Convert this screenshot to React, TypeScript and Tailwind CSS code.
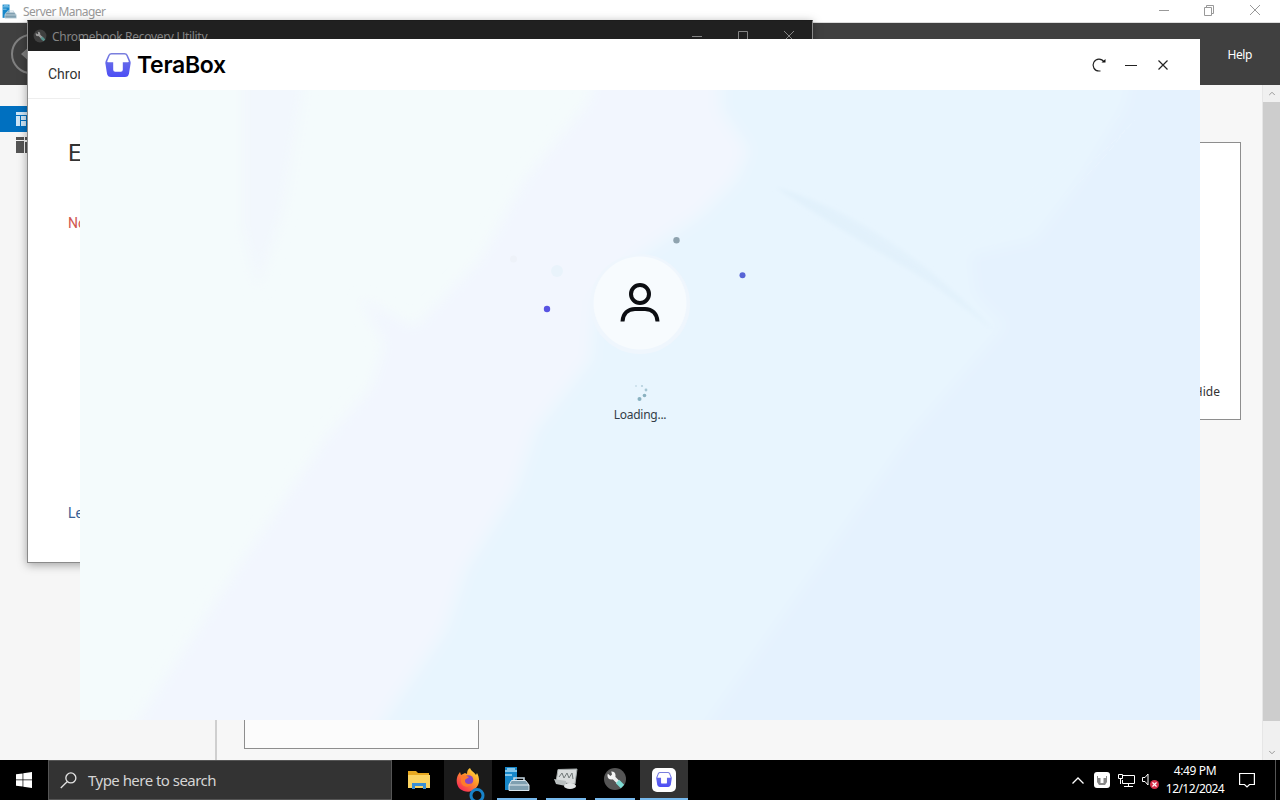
import { ChevronUp, ChevronDown, X } from "lucide-react";

const spinnerDots = [
  { x: 4, y: 3, r: 1, o: 0.3 },
  { x: 10, y: 3, r: 1.1, o: 0.45 },
  { x: 14, y: 7, r: 1.4, o: 0.6 },
  { x: 12.5, y: 12.5, r: 1.8, o: 0.85 },
  { x: 7.5, y: 16, r: 2, o: 0.85 },
];

function ServerIcon({ className }: { className: string }) {
  return (
    <svg viewBox="0 0 26 26" className={className}>
      <path d="M1 1h12v23H1z" fill="#1787c9" />
      <path d="M1 5h12M1 9h7M3 3h8" stroke="#a9dcf5" strokeWidth="1.3" />
      <path d="M10 15V12h10v3" fill="none" stroke="#c6d8e2" strokeWidth="1.6" />
      <path d="M7.500 14.500h14L25 19v5.500H5V19z" fill="#7f9fb0" stroke="#d8e6ee" />
      <path d="M5 19h20" stroke="#e5eef3" />
    </svg>
  );
}

function TeraMark({ className }: { className: string }) {
  return (
    <svg viewBox="0 0 26 24" className={className}>
      <defs>
        <linearGradient id="mark" x1="0" x2="0" y1="0" y2="1">
          <stop offset="0" stopColor="#7b80dc" />
          <stop offset="0.4" stopColor="#6468ea" />
          <stop offset="1" stopColor="#4c4df5" />
        </linearGradient>
      </defs>
      <path
        d="M6.500 0h13q2.300 0 3.200 2l2.600 6q.5 1.200.3 2.500L24 20.500Q23.400 24 20 24H6Q2.600 24 2 20.500L.4 10.500Q.2 9.200.7 8l2.600-6Q4.200 0 6.500 0z"
        fill="url(#mark)"
      />
      <path
        d="M6.500 1.500h13q1.300 0 1.900 1.300l2.300 5.400q.4 1-.7 1h-5.200v7.500q0 2-2 2h-5.600q-2 0-2-2V9.200H3q-1.100 0-.7-1l2.300-5.400q.6-1.300 1.900-1.300z"
        fill="#fff"
      />
    </svg>
  );
}

function WrenchIcon({ className }: { className: string }) {
  return (
    <svg viewBox="0 0 24 24" className={className}>
      <circle cx="12" cy="12" r="11" fill="#555" />
      <path d="M9 9l7 7" stroke="#eee" strokeWidth="3.600" strokeLinecap="round" />
      <path d="M14.500 14.500l5 5" stroke="#7fdcd4" strokeWidth="4.800" />
      <circle cx="8.500" cy="8.500" r="4" fill="#f5f5f5" />
      <path d="M4 6l3.500 3 1.500-1.500-1-4z" fill="#555" />
    </svg>
  );
}

function ServerManager() {
  return (
    <div className="flex h-[760px] w-[1280px] flex-col bg-[#f7f7f7]">
      <div className="flex h-[23px] shrink-0 items-center justify-between border-b border-[#ddd] bg-white pl-[2px] text-[#999]">
        <div className="flex items-center gap-[6px] text-[12px]">
          <ServerIcon className="size-[15px]" />
          <span className="pt-[2px] tracking-[-0.55px]">Server Manager</span>
        </div>
        <svg viewBox="0 0 108 14" className="mr-[16px] mb-[2px] h-[14px] w-[108px]" fill="none" stroke="#999">
          <path d="M3 7.500h10M48.500 4.500h7v8h-7zM50.500 4.500v-2h7v8h-2" />
          <path d="M94 2l10 10M104 2L94 12" />
        </svg>
      </div>
      <div className="flex h-[62px] shrink-0 items-center justify-between bg-[#404040] pr-[28px] pl-[10px]">
        <svg viewBox="0 0 42 42" className="size-[42px]" fill="none" stroke="#808080" strokeWidth="2">
          <circle cx="21" cy="21" r="19" />
          <path d="M21 12l-10 9 10 9v-6h10v-6H21z" fill="#808080" stroke="none" />
        </svg>
        <span className="pt-[2px] text-[12px] tracking-[-0.4px] text-white">Help</span>
      </div>
      <div className="flex min-h-0 flex-1">
        <div className="w-[217px] border-r-2 border-[#cfcfcf] bg-[#f6f6f6] pt-[21px]">
          <div className="flex h-[26px] items-center bg-[#0070c0] pl-[16px]">
            <svg viewBox="0 0 16 14" className="h-[14px] w-[16px]">
              <path d="M0 0h16v14H0z" fill="#cfe6f7" />
              <path d="M0 3.500h16M4.500 4v10M5 8.500h6M10.500 4v10" stroke="#0070c0" />
            </svg>
          </div>
          <div className="flex h-[26px] items-center pl-[16px]">
            <svg viewBox="0 0 16 16" className="size-[16px]" fill="#555">
              <path d="M0 0h8v3H0zM0 4h8v12H0zM9 0h7v3H9zM9 5h7v11H9z" />
            </svg>
          </div>
        </div>
        <div className="flex flex-1 flex-col justify-between pt-[57px] pr-[21px] pb-[11px] pl-[27px]">
          <div className="flex h-[278px] items-end justify-end border border-[#8e8e8e] bg-white pr-[20px] pb-[18px] text-[12px] text-[#333]">
            Hide
          </div>
          <div className="h-[120px] w-[235px] border border-[#8e8e8e] bg-[#fcfcfc]" />
        </div>
        <div className="flex w-[18px] flex-col items-center border-l border-[#e6e6e6] bg-[#f0f0f0]">
          <ChevronUp className="h-[17px] w-[10px] text-[#888]" />
          <div className="w-full flex-1 bg-[#cdcdcd]" />
          <ChevronDown className="h-[39px] w-[10px] pt-[24px] text-[#888]" />
        </div>
      </div>
    </div>
  );
}

function RecoveryUtility() {
  return (
    <div className="absolute top-[20px] left-[27px] flex h-[543px] w-[786px] flex-col border border-[#8a8a8a] border-t-[#1c1c1c] bg-white shadow-[0_2px_9px_rgba(0,0,0,0.35)]">
      <div className="flex h-[30px] shrink-0 items-center justify-between bg-[#202020] pr-[16px] pl-[5px] text-[12px] text-[#858585]">
        <div className="flex items-center gap-[5px]">
          <WrenchIcon className="size-[14px] opacity-60" />
          <span className="pt-px tracking-[-0.3px]">Chromebook Recovery Utility</span>
        </div>
        <svg viewBox="0 0 104 12" className="h-[12px] w-[104px]" fill="none" stroke="#858585">
          <path d="M0 6.500h10M46.500 1.500h9v9h-9zM92 1l10 10M102 1L92 11" />
        </svg>
      </div>
      <div className="flex h-[48px] shrink-0 items-center border-b border-[#eee] pl-[20px] font-[Roboto] text-[14px] text-[#333]">
        Chrom
      </div>
      <div className="flex flex-1 flex-col pl-[40px] font-[Roboto]">
        <span className="mt-[38px] text-[24px] leading-[32px] text-[#333]">E</span>
        <span className="mt-[44px] text-[14px] leading-[20px] text-[#d0564e]">No</span>
        <span className="mt-[270px] text-[14px] leading-[20px] text-[#3b5f95]">Le</span>
      </div>
    </div>
  );
}

// soft diagonal colour bands behind the loading state
function Backdrop() {
  return (
    <svg viewBox="0 0 1120 630" className="absolute inset-0 h-[630px] w-[1120px]">
      <defs>
        <linearGradient id="fold" x1="800" y1="175" x2="835" y2="125" gradientUnits="userSpaceOnUse">
          <stop offset="0" stopColor="#e0f0fb" />
          <stop offset="1" stopColor="#e8f5fe" />
        </linearGradient>
        <filter id="soft" x="-5%" y="-5%" width="110%" height="110%">
          <feGaussianBlur stdDeviation="7" />
        </filter>
        <filter id="softFold" x="-5%" y="-10%" width="110%" height="120%">
          <feGaussianBlur stdDeviation="2" />
        </filter>
      </defs>
      <path d="M0 0h1120v630H0z" fill="#f4fbfc" />
      <g filter="url(#soft)">
        <path d="M163 -20h60v20l-20 120-25 80-15-60z" fill="#f2f7fd" />
        <path d="M515 -20L510 10 445 90 400 170 335 238 280 208 305 255 290 300 245 350 150 490 45 650H700V-20z" fill="#f2f6fe" />
        <path d="M640 -20L641 20 668 60 655 90 620 125 560 165 515 210 510 270 455 340 435 400 385 480 365 540 290 650H1140V-20z" fill="#e8f5fe" />
        <path d="M1052 -20L1045 15 1000 90 955 150 890 165 895 205 925 235 830 345 735 480 615 650H1140V-20z" fill="#e5f2fe" />
      </g>
      <path d="M695 97Q810 130 915 242 870 205 830 180 760 140 695 97z" fill="url(#fold)" filter="url(#softFold)" />
      <g fill="none" stroke="#eaf5fe" strokeDasharray="8 3">
        <path d="M875 165Q990 80 1040 25M890 160Q1005 85 1055 30M880 150Q970 90 1030 28M910 158Q1005 100 1045 40" />
      </g>
    </svg>
  );
}

function TeraBox() {
  return (
    <div className="absolute top-[39px] left-[80px] flex h-[681px] w-[1120px] flex-col bg-white">
      <div className="flex h-[51px] shrink-0 items-center justify-between pr-[29px] pl-[25px]">
        <div className="flex items-center gap-[5px]">
          <TeraMark className="h-[24px] w-[26px]" />
          <span className="pl-px font-[Inter] text-[23px] leading-[30px] font-semibold tracking-[-0.3px] text-black">TeraBox</span>
        </div>
        <svg viewBox="0 0 80 18" className="h-[18px] w-[80px]" fill="none" stroke="#222" strokeWidth="1.200">
          <path d="M9.500 15H8A5.900 5.900 0 1 1 13 6" />
          <path d="M10.500 6.500h4V3z" fill="#111" stroke="none" />
          <path d="M34 9.500h12M67.500 4.500l9 9M76.500 4.500l-9 9" />
        </svg>
      </div>
      <div className="relative flex flex-1 flex-col items-center pt-[167px]">
        <Backdrop />
        <svg viewBox="0 0 260 130" className="relative mt-[-27px] h-[130px] w-[260px]">
          <circle cx="130" cy="74" r="50" fill="#eff6fd" />
          <circle cx="130" cy="73" r="46.500" fill="#f7fbfe" />
          <circle cx="130" cy="64" r="9" fill="none" stroke="#0b0d12" strokeWidth="4" />
          <path d="M112.500 91.500C113 83.500 118 79 125 79h10c7 0 12 4.500 12.500 12.500" fill="none" stroke="#0b0d12" strokeWidth="4" />
          <circle cx="166.500" cy="10.300" r="3.200" fill="#8fa3af" />
          <circle cx="232.500" cy="45.200" r="3" fill="#5764d6" />
          <circle cx="37" cy="79" r="3.200" fill="#5853e2" />
          <circle cx="47" cy="41" r="6" fill="#e9f3fb" />
          <circle cx="3.500" cy="29" r="3.500" fill="#eef2f9" />
        </svg>
        <svg viewBox="0 0 18 20" className="relative mt-[23px] h-[20px] w-[18px] translate-x-[1px]">
          {spinnerDots.map((dot) => (
            <circle key={dot.x} cx={dot.x} cy={dot.y} r={dot.r} fill="#78a5b5" opacity={dot.o} />
          ))}
        </svg>
        <span className="relative mt-[3px] text-[12px] leading-[18px] tracking-[-0.25px] text-[#333d47]">Loading...</span>
      </div>
    </div>
  );
}

function Taskbar() {
  return (
    <div className="flex h-[40px] w-[1280px] justify-between bg-black text-white">
      <div className="flex">
        <div className="flex w-[48px] items-center justify-center">
          <svg viewBox="0 0 16 16" className="size-[16px]" fill="#fff">
            <path d="M0 2.300l6.600-.9v6.200H0zM7.300 1.300L16 0v7.600H7.300zM0 8.300h6.600v6.300L0 13.700zM7.300 8.300H16V16l-8.700-1.300z" />
          </svg>
        </div>
        <div className="flex w-[344px] items-center gap-[11px] border border-[#555] bg-[#333] pl-[11px] text-[15px] text-[#d5d5d5]">
          <svg viewBox="0 0 18 18" className="size-[17px]" fill="none" stroke="#e2e2e2" strokeWidth="1.400">
            <circle cx="11.500" cy="6.300" r="5.300" />
            <path d="M7.500 10.300L.8 17" />
          </svg>
          <span className="tracking-[-0.53px]">Type here to search</span>
        </div>
        <div className="flex w-[52px] items-center justify-center pl-[2px]">
          <svg viewBox="0 0 22 20" className="h-[20px] w-[22px]">
            <path d="M0 1h8l2 2h11v15H0z" fill="#e8a920" />
            <path d="M0 5h22v13H0z" fill="#fcd462" />
            <path d="M4 19v-6h14v6h-3v-3H7v3z" fill="#3b8fd4" />
          </svg>
        </div>
        <div className="relative flex w-[48px] items-center justify-center bg-[#1b1b1b]">
          <svg viewBox="0 0 24 24" className="size-[24px]">
            <defs>
              <linearGradient id="fox" x1="1" y1="0" x2="0.200" y2="1">
                <stop offset="0" stopColor="#fff04a" />
                <stop offset="0.450" stopColor="#ff9a28" />
                <stop offset="1" stopColor="#f8245a" />
              </linearGradient>
            </defs>
            <path d="M14 0c1 3 4 4 6 7l1-2c3 5 3 12-2 16-4 4-11 3-15 0C0 17 0 11 2 7l2-3 1 3 4-2 2 1c0-3 1-5 3-6z" fill="url(#fox)" />
            <circle cx="12.500" cy="12" r="4.800" fill="#8a45c4" />
            <path d="M5 8c3-2 6 0 8 1-1 2-4 1-4 4s4 4 7 2c-2 5-10 5-11-1z" fill="#ff7b2b" />
          </svg>
          <svg viewBox="0 0 18 13" className="absolute right-[6px] bottom-0 h-[13px] w-[18px]">
            <circle cx="9" cy="8.500" r="6" fill="#111" stroke="#1883c9" strokeWidth="3" />
          </svg>
        </div>
        <div className="flex items-stretch">
          <div className="flex w-[49px] items-center justify-center">
            <div className="flex h-full w-[40px] items-center justify-center border-b-2 border-[#76b9ed]">
              <ServerIcon className="size-[26px]" />
            </div>
          </div>
          <div className="flex w-[49px] items-center justify-center">
            <div className="flex h-full w-[40px] items-center justify-center border-b-2 border-[#76b9ed]">
              <svg viewBox="0 0 24 22" className="h-[22px] w-[24px]">
                <path d="M4 1.500L23 1l-2 15-19-2z" fill="#d9dcdc" stroke="#a5abab" />
                <path d="M0 11l12 2v5L2 16z" fill="#b9bfbf" />
                <ellipse cx="16" cy="18" rx="6" ry="3" fill="#e3e6e6" />
                <path d="M5 9l3-4 2 5 3-5 2 5 3-5 1 6" fill="none" stroke="#737a7a" />
              </svg>
            </div>
          </div>
          <div className="flex w-[49px] items-center justify-center">
            <div className="flex h-full w-[40px] items-center justify-center border-b-2 border-[#76b9ed]">
              <WrenchIcon className="size-[24px]" />
            </div>
          </div>
          <div className="ml-px flex w-[48px] items-center justify-center border-b-2 border-[#76b9ed] bg-[#333] pt-px">
            <div className="flex size-[24px] items-center justify-center rounded-[5px] bg-white">
              <TeraMark className="h-[15px] w-[16px]" />
            </div>
          </div>
        </div>
      </div>
      <div className="flex items-center">
        <svg viewBox="0 0 12 7" className="mr-[10px] h-[7px] w-[12px]" fill="none" stroke="#fff" strokeWidth="1.300">
          <path d="M.5 6.500L6 1l5.500 5.500" />
        </svg>
        <div className="mr-[8px] flex size-[16px] items-center justify-center rounded-[3px] bg-white">
          <svg viewBox="0 0 12 12" className="size-[12px]">
            <path d="M1 2h10v6l-2 3H3L1 8z" fill="#888" />
            <path d="M2 2h8v2H7.500v5h-3V4H2z" fill="#fff" />
          </svg>
        </div>
        <svg viewBox="0 0 17 15" className="mr-[7px] h-[15px] w-[17px]" fill="none" stroke="#fff">
          <path d="M5 2.500h11.500v8H4.500V7M10.500 10.500v3M6 13.500h9M.5 1.500h4v4h-4zM2.500 5.500V11" />
        </svg>
        <div className="relative mr-[7px] flex h-[16px] w-[17px] items-center">
          <svg viewBox="0 0 17 16" className="h-[16px] w-[17px]" fill="none" stroke="#fff">
            <path d="M.5 5.500H3l3-3.500v11l-3-3.500H.5z" />
          </svg>
          <div className="absolute right-0 bottom-[-1px] flex size-[9px] items-center justify-center rounded-full bg-[#d6304a]">
            <X className="size-[7px]" strokeWidth={4} />
          </div>
        </div>
        <div className="flex w-[58px] flex-col items-center text-[12px] leading-[18px]">
          <span className="tracking-[-0.35px]">4:49 PM</span>
          <span className="tracking-[-0.55px] whitespace-nowrap">12/12/2024</span>
        </div>
        <svg viewBox="0 0 16 16" className="mr-[20px] ml-[15px] size-[16px]" fill="none" stroke="#fff" strokeWidth="1.200">
          <path d="M.6 1.500h14.800v11H10.500L8 15l-2.500-2.500H.6z" />
        </svg>
        <div className="mr-[4px] h-full w-px bg-[#555]" />
      </div>
    </div>
  );
}

export default function App() {
  return (
    <div className="relative h-[800px] w-[1280px] overflow-hidden font-['Noto_Sans',sans-serif]">
      <ServerManager />
      <RecoveryUtility />
      <TeraBox />
      <Taskbar />
    </div>
  );
}
